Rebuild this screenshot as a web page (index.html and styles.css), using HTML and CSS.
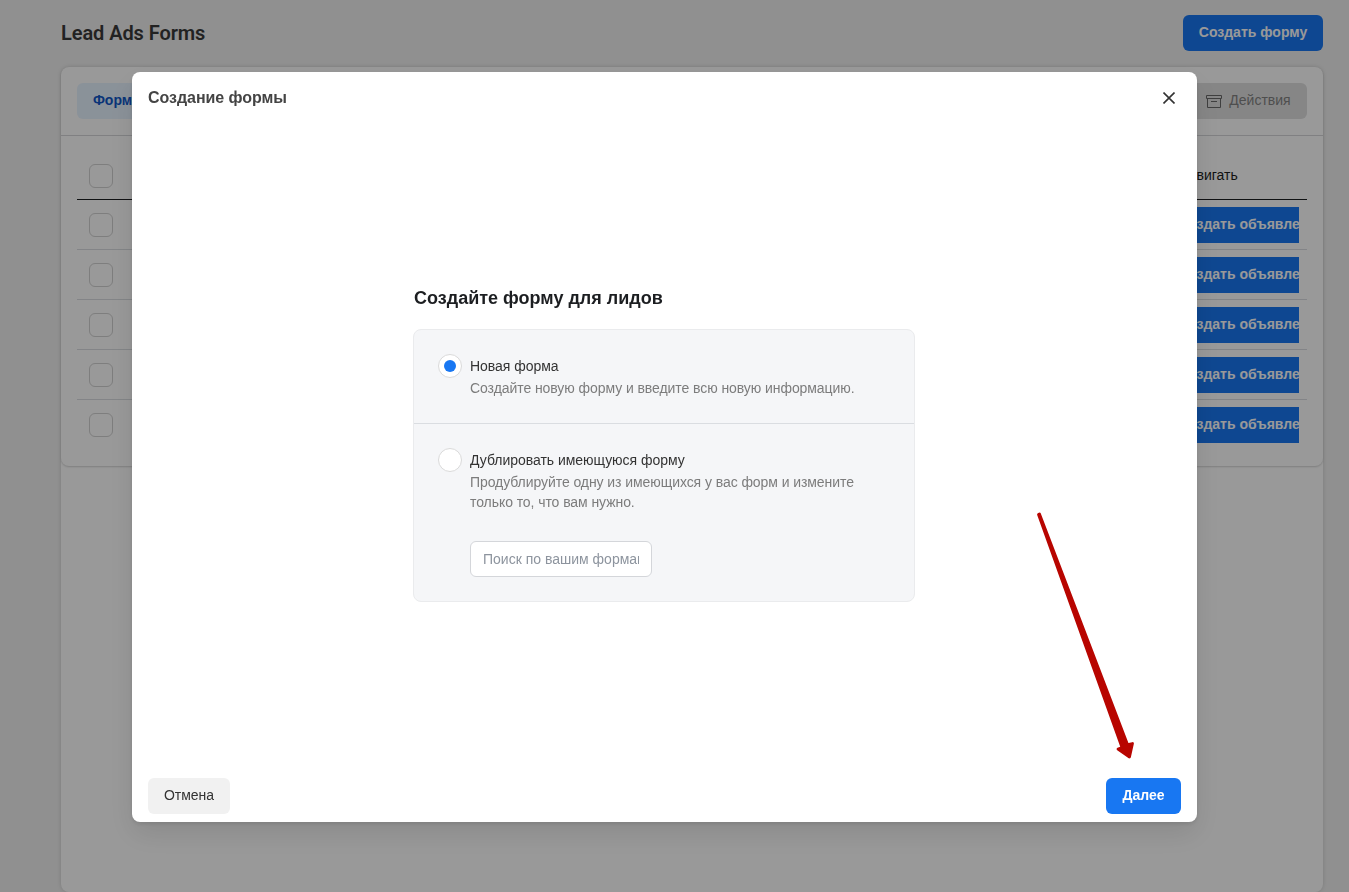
FILE: index.html
```html
<!DOCTYPE html>
<html lang="ru">
<head>
    <meta charset="UTF-8">
    <meta name="viewport" content="width=device-width, initial-scale=1.0">
    <title>Lead Ads Forms</title>
    <link rel="stylesheet" href="styles.css">
</head>
<body>
    <div class="page">
        <div class="page-header">
            <h1>Lead Ads Forms</h1>
            <button class="btn btn-primary btn-create">Создать форму</button>
        </div>

        <div class="panel">
            <div class="card">
                <div class="toolbar">
                    <button class="btn btn-tab">Формы</button>
                    <button class="btn btn-actions">
                        <svg width="16" height="14" viewBox="0 0 16 14" fill="none" stroke="#6a6a6a">
                            <path d="M.5 .5h15v3H.5zM1.5 3.5v9h13v-9M5 6.5h6"/>
                        </svg>
                        <span>Действия</span>
                    </button>
                </div>
                <div class="table">
                    <div class="row row-head">
                        <span class="checkbox"></span>
                        <span class="col-promote">Продвигать</span>
                    </div>
                    <div class="row">
                        <span class="checkbox"></span>
                        <div class="cell"><span>Создать объявление</span></div>
                    </div>
                    <div class="row">
                        <span class="checkbox"></span>
                        <div class="cell"><span>Создать объявление</span></div>
                    </div>
                    <div class="row">
                        <span class="checkbox"></span>
                        <div class="cell"><span>Создать объявление</span></div>
                    </div>
                    <div class="row">
                        <span class="checkbox"></span>
                        <div class="cell"><span>Создать объявление</span></div>
                    </div>
                    <div class="row">
                        <span class="checkbox"></span>
                        <div class="cell"><span>Создать объявление</span></div>
                    </div>
                </div>
            </div>
        </div>
    </div>

    <div class="overlay">
        <div class="modal">
            <div class="modal-header">
                <h2>Создание формы</h2>
                <button class="close" aria-label="Закрыть">
                    <svg width="12" height="12" viewBox="0 0 12 12" fill="none" stroke="#333" stroke-width="1.6">
                        <path d="M.5 .5l11 11M11.5 .5l-11 11"/>
                    </svg>
                </button>
            </div>

            <div class="modal-body">
                <h3>Создайте форму для лидов</h3>
                <div class="options">
                    <div class="option">
                        <span class="radio checked"></span>
                        <div class="option-text">
                            <div class="option-title">Новая форма</div>
                            <p>Создайте новую форму и введите всю новую информацию.</p>
                        </div>
                    </div>
                    <div class="option">
                        <span class="radio"></span>
                        <div class="option-text">
                            <div class="option-title">Дублировать имеющуюся форму</div>
                            <p>Продублируйте одну из имеющихся у вас форм и измените только то, что вам нужно.</p>
                            <input type="text" class="search" placeholder="Поиск по вашим формам">
                        </div>
                    </div>
                </div>
            </div>

            <div class="modal-footer">
                <button class="btn btn-cancel">Отмена</button>
                <button class="btn btn-primary btn-next">Далее</button>
            </div>

            <svg class="arrow" width="100" height="250" viewBox="0 0 100 250">
                <path d="M2.5 2.5L3.5 2L91.5 232.5L96.5 231.5L93.5 245L82 237L86 235.5Z" fill="#b80500" stroke="#b80500" stroke-width="2.8" stroke-linejoin="round"/>
            </svg>
        </div>
    </div>
</body>
</html>
```

FILE: styles.css
```css
* {
    box-sizing: border-box;
}
body {
    font-family: 'Liberation Sans', Arial, sans-serif;
    font-size: 14px;
    background: #f0f0f0;
    color: #1c1e21;
    margin: 0;
    height: 892px;
    overflow: hidden;
}
h1, h2, h3, p {
    margin: 0;
}
.page {
    display: flex;
    flex-direction: column;
    height: 892px;
    padding: 0 26px 0 61px;
}
.page-header {
    display: flex;
    align-items: center;
    justify-content: space-between;
    height: 67px;
    padding-bottom: 1px;
}
.page-header h1 {
    font: 600 20px/24px Roboto, sans-serif;
    letter-spacing: -0.08px;
    color: #3a3a3a;
}
.btn {
    display: flex;
    align-items: center;
    justify-content: center;
    height: 36px;
    padding: 0 0 2px;
    border: none;
    border-radius: 6px;
    font: 14px/20px 'Liberation Sans', Arial, sans-serif;
    cursor: pointer;
}
.btn-primary {
    background: #1877f2;
    color: white;
    font-weight: bold;
}
.btn-create {
    width: 140px;
}
.panel {
    flex: 1;
    background: white;
    border-radius: 8px;
    box-shadow: 0 0 4px rgba(0,0,0,0.14);
}
.card {
    height: 399px;
    border-radius: 8px;
    box-shadow: 0 1px 2px rgba(0,0,0,0.18);
}
.toolbar {
    display: flex;
    justify-content: space-between;
    height: 69px;
    padding: 16px;
    border-bottom: 1px solid #d5d6d9;
}
.btn-tab {
    width: 83px;
    background: #e7f3ff;
    color: #1058c8;
    font-weight: bold;
}
.btn-actions {
    gap: 7px;
    width: 117px;
    background: #e0e0e0;
    color: #838383;
}
.btn-actions svg {
    position: relative;
    top: 2px;
}
.table {
    padding: 16px 16px 0;
}
.row {
    display: flex;
    align-items: center;
    justify-content: space-between;
    height: 50px;
    padding: 0 8px 0 12px;
    border-bottom: 1px solid #dadde1;
}
.row-head {
    height: 48px;
    border-bottom-color: #1c1e21;
}
.row:last-child {
    border-bottom-color: transparent;
}
.checkbox {
    width: 24px;
    height: 24px;
    border: 1px solid #d2d2d2;
    border-radius: 6px;
}
.col-promote {
    width: 136px;
    padding-bottom: 2px;
}
.cell {
    display: flex;
    align-items: center;
    width: 137px;
    height: 36px;
    padding: 0 0 2px 16px;
    background: #1877f2;
    color: white;
    font-weight: bold;
    white-space: nowrap;
    overflow: hidden;
}
.overlay {
    position: fixed;
    inset: 0;
    padding: 72px 0 0 132px;
    background: rgba(0,0,0,0.4);
}
.modal {
    position: relative;
    display: flex;
    flex-direction: column;
    width: 1065px;
    height: 750px;
    background: white;
    border-radius: 8px;
    box-shadow: 0 12px 28px rgba(0,0,0,0.1), 0 2px 4px rgba(0,0,0,0.1);
}
.modal-header {
    display: flex;
    align-items: center;
    justify-content: space-between;
    height: 52px;
    padding: 0 22px 0 16px;
}
.modal-header h2 {
    font-size: 16px;
    line-height: 20px;
    letter-spacing: -0.05px;
    color: #444;
}
.close {
    display: flex;
    padding: 0;
    border: none;
    background: none;
}
.modal-body {
    flex: 1;
    width: 502px;
    margin-left: 281px;
    padding-top: 162px;
}
.modal-body h3 {
    margin: 0 0 19px 1px;
    font-size: 18px;
    line-height: 24px;
}
.options {
    background: #f5f6f8;
    border: 1px solid #eaebed;
    border-radius: 8px;
}
.option {
    display: flex;
    gap: 8px;
    padding: 24px;
}
.option:first-child {
    padding-bottom: 25px;
}
.option + .option {
    border-top: 1px solid #dadde1;
}
.radio {
    display: flex;
    align-items: center;
    justify-content: center;
    flex: none;
    width: 24px;
    height: 24px;
    background: white;
    border: 1px solid #dadada;
    border-radius: 50%;
}
.radio.checked::after {
    content: '';
    width: 12px;
    height: 12px;
    border-radius: 50%;
    background: #1877f2;
}
.option-title {
    line-height: 24px;
    letter-spacing: -0.03px;
    color: #333;
}
.option-text p {
    width: 400px;
    line-height: 20px;
    letter-spacing: -0.07px;
    color: #7c7c7c;
}
.search {
    display: block;
    width: 182px;
    height: 36px;
    margin-top: 29px;
    padding: 0 12px;
    border: 1px solid #d4d6da;
    border-radius: 6px;
    font: 14px 'Liberation Sans', Arial, sans-serif;
}
.search::placeholder {
    color: #8d949e;
}
.modal-footer {
    display: flex;
    justify-content: space-between;
    padding: 0 16px 8px;
}
.btn-cancel {
    width: 82px;
    background: #f1f1f1;
    color: #333;
}
.btn-next {
    width: 75px;
}
/* pointer to the "next" button */
.arrow {
    position: absolute;
    left: 904px;
    top: 440px;
}
```
